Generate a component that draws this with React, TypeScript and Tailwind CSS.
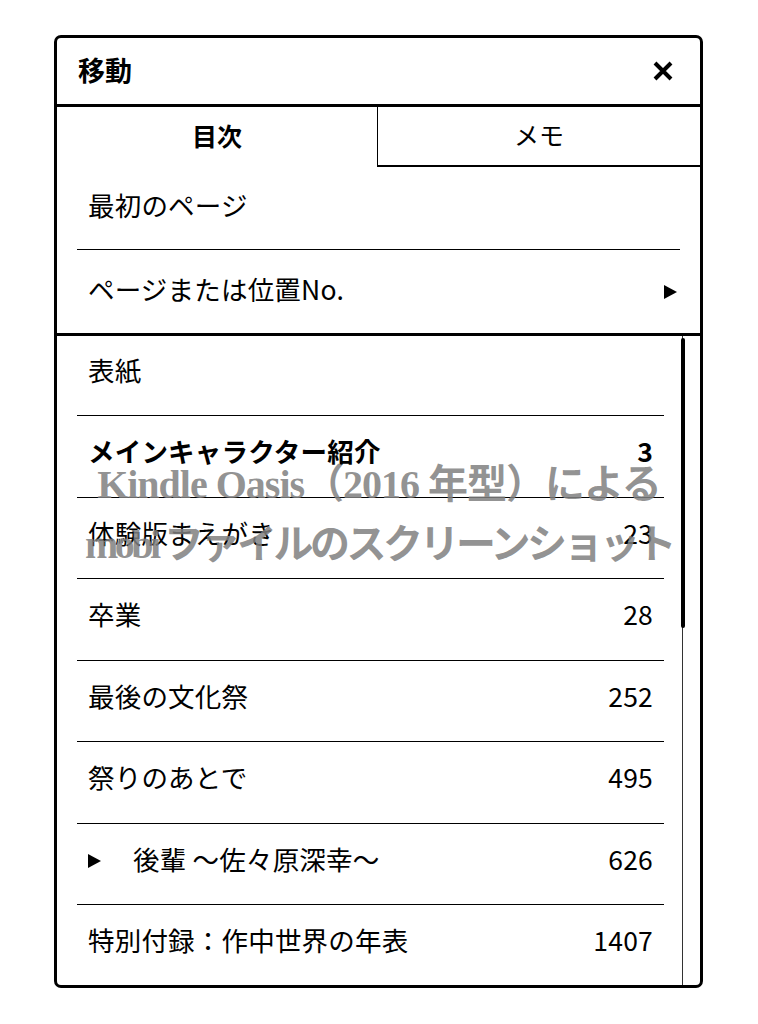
import React from "react";

const rows: { title: string; page: string; bold?: boolean; arrow?: boolean }[] = [
  { title: "表紙", page: "" },
  { title: "メインキャラクター紹介", page: "3", bold: true },
  { title: "体験版まえがき", page: "23" },
  { title: "卒業", page: "28" },
  { title: "最後の文化祭", page: "252" },
  { title: "祭りのあとで", page: "495" },
  { title: "後輩 ～佐々原深幸～", page: "626", arrow: true },
  { title: "特別付録：作中世界の年表", page: "1407" },
];

export default function App() {
  return (
    <div
      className="w-[758px] h-[1024px] bg-white pt-[35px] pl-[54px] text-black relative"
      style={{ fontFamily: '"Noto Sans CJK JP", "Noto Sans", sans-serif' }}
    >
      <div className="w-[649px] h-[953px] border-[3px] border-black rounded-[7px] flex flex-col overflow-hidden">
        {/* Header */}
        <div className="h-[69px] border-b-[3px] border-black flex items-center justify-between pl-[21px] pr-[26px] shrink-0">
          <span className="text-[27px] font-bold leading-none pb-[4px]">移動</span>
          <svg width="22" height="22" viewBox="0 0 22 22">
            <path d="M3 3 L19 19 M19 3 L3 19" stroke="black" strokeWidth="4" strokeLinecap="butt" />
          </svg>
        </div>
        {/* Tabs */}
        <div className="h-[60px] flex shrink-0">
          <div className="w-[320px] flex items-center justify-center text-[25px] font-bold leading-none pb-[4px]">目次</div>
          <div className="flex-1 border-l-[1.5px] border-b-[2px] border-black flex items-center justify-center text-[25px] leading-none pb-[4px]">
            メモ
          </div>
        </div>
        {/* Fixed items */}
        <div className="px-[20px] border-b-[3px] border-black shrink-0">
          <div className="h-[83px] flex items-center pl-[11px] pb-[6px] border-b-[1.5px] border-black text-[26.5px] tracking-[0.2px] leading-none">
            最初のページ
          </div>
          <div className="h-[83px] flex items-center justify-between pl-[11px] pr-[3px] pb-[4px] text-[26.5px] tracking-[0.2px] leading-none">
            <span>ページまたは位置No.</span>
            <svg width="13" height="14" viewBox="0 0 13 14" className="mt-[4px]">
              <path d="M0 0 L13 7 L0 14 Z" fill="black" />
            </svg>
          </div>
        </div>
        {/* List */}
        <div className="flex-1 flex">
          <div className="w-[607px] pl-[20px] shrink-0">
            {rows.map((r, i) => (
              <div
                key={i}
                className={`flex items-center justify-between pl-[11px] pr-[11px] pb-[10px] text-[26.5px] tracking-[0.2px] leading-none ${
                  i === rows.length - 1 ? "h-[81px]" : "border-b-[1.5px] border-black"
                } ${i === 0 ? "h-[80px]" : "h-[81.5px]"} ${r.bold ? "font-bold" : ""}`}
              >
                <span className="flex items-center">
                  {r.arrow && (
                    <svg width="13" height="14" viewBox="0 0 13 14" className="mr-[32px] mt-[4px]">
                      <path d="M0 0 L13 7 L0 14 Z" fill="black" />
                    </svg>
                  )}
                  {r.title}
                </span>
                <span>{r.page}</span>
              </div>
            ))}
          </div>
          <div className="w-[36px] flex justify-center pl-[1px]">
            <div className="relative w-[4px] h-full flex justify-center">
              <div className="w-[1.5px] h-full bg-[#333]" />
              <div className="absolute top-[2px] left-0 w-[4px] h-[290px] bg-black rounded-[2px]" />
            </div>
          </div>
        </div>
      </div>
      {/* Watermark */}
      <div
        className="absolute left-0 top-[455px] w-[758px] flex flex-col items-center text-[40px] font-bold leading-[60px] text-[rgba(128,128,128,0.85)] pointer-events-none"
        style={{ fontFamily: '"Liberation Serif", "Noto Sans CJK JP", serif' }}
      >
        <div className="tracking-[-1px]">Kindle Oasis（2016 年型）による</div>
        <div className="tracking-[-3.5px]">mobi ファイルのスクリーンショット</div>
      </div>
    </div>
  );
}
